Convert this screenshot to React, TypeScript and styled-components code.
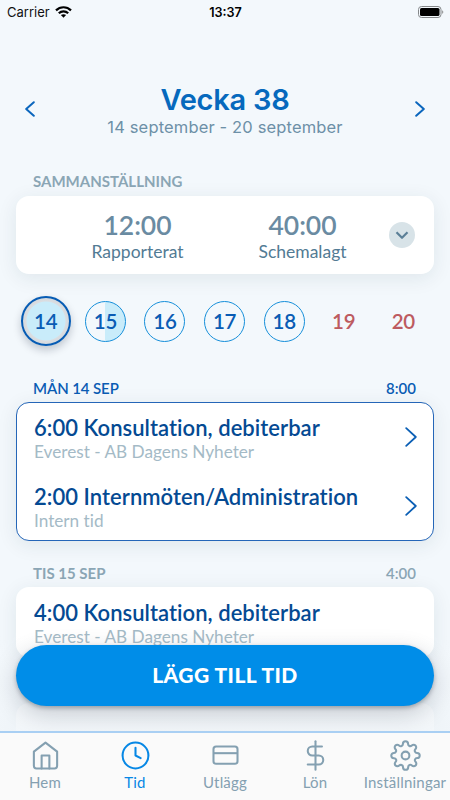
import React from "react";
import styled, { createGlobalStyle, css } from "styled-components";
import { FiHome, FiClock, FiDollarSign, FiSettings } from "react-icons/fi";

const GlobalStyle = createGlobalStyle`
  * { box-sizing: border-box; }
  body { margin: 0; background: #f3f8fc; }
`;

const Screen = styled.div`
  width: 450px;
  height: 800px;
  display: flex;
  flex-direction: column;
  overflow: hidden;
  position: relative;
  background: #f3f8fc;
  font-family: Lato, sans-serif;
  font-variant-ligatures: none;
`;

const StatusBar = styled.div`
  height: 24px;
  flex: none;
  display: grid;
  grid-template-columns: 1fr auto 1fr;
  align-items: center;
  padding: 0 6px 0 7px;
  font: 400 13px/24px Inter, sans-serif;
  color: #111;
`;

const Carrier = styled.div`
  display: flex;
  align-items: center;
  gap: 5px;
  padding-bottom: 1px;
`;

const Clock = styled.div`
  font-weight: 600;
  font-size: 12.6px;
  color: #000;
`;

const BatterySlot = styled.div`
  display: flex;
  justify-content: flex-end;
  padding-bottom: 2px;
`;

const Header = styled.header`
  height: 148px;
  flex: none;
  display: flex;
  justify-content: space-between;
  padding: 60px 24px 0;
`;

const WeekArrow = styled.button`
  width: 12px;
  height: 50px;
  padding: 0;
  border: 0;
  background: none;
  display: flex;
  align-items: center;
  justify-content: center;
`;

const WeekTitle = styled.div`
  text-align: center;
  font-family: Inter, sans-serif;
`;

const Week = styled.h1`
  margin: 0;
  font-size: 29px;
  line-height: 32px;
  font-weight: 600;
  letter-spacing: -0.25px;
  color: #0669bd;
`;

const WeekRange = styled.div`
  font-size: 16.5px;
  line-height: 22px;
  letter-spacing: 0.15px;
  color: #6d90a7;
`;

const SectionHead = styled.div<{ $active?: boolean }>`
  height: 30px;
  flex: none;
  display: flex;
  justify-content: space-between;
  padding: ${(p) => (p.$active ? "1px" : "0")} 34px 0 33px;
  font-size: 15px;
  line-height: 18px;
  font-weight: ${(p) => (p.$active ? 600 : 700)};
  letter-spacing: ${(p) => (p.$active ? "-0.1px" : "0")};
  color: ${(p) => (p.$active ? "#0a5cb4" : "#8ba6b5")};
`;

const DayHours = styled.span`
  font-weight: 600;
  letter-spacing: 0;
`;

const card = css`
  flex: none;
  margin: 0 16px;
  border-radius: 13px;
  background: #fff;
  box-shadow: 0 4px 20px rgba(20, 50, 70, 0.09);
`;

const Summary = styled.section`
  ${card}
  height: 78px;
  margin-top: -6px;
  display: grid;
  grid-template-columns: 39px 165px 165px 1fr;
  align-items: center;
`;

const Total = styled.div`
  text-align: center;
  padding-top: 3px;
`;

const TotalValue = styled.div`
  font-size: 26.5px;
  line-height: 29px;
  font-weight: 600;
  color: #6a8ba2;
`;

const TotalLabel = styled.div`
  font-size: 17.5px;
  line-height: 23px;
  color: #527b94;
`;

const Expand = styled.button`
  width: 26px;
  height: 26px;
  padding: 0;
  margin-left: 4px;
  border: 0;
  border-radius: 50%;
  background: #d8e3e8;
  display: flex;
  align-items: center;
  justify-content: center;
`;

const Days = styled.div`
  height: 50px;
  flex: none;
  margin: 22px 16px 32px;
  display: grid;
  grid-template-columns: repeat(7, 59.6px);
  align-items: center;
  justify-items: center;
`;

type DayKind = "selected" | "half" | "empty" | "weekend";

const Day = styled.button<{ $kind: DayKind }>`
  width: 41px;
  height: 41px;
  padding: 0;
  border-radius: 50%;
  border: 1px solid #168fda;
  background: transparent;
  font: 600 20.5px/39px Lato, sans-serif;
  letter-spacing: -0.2px;
  color: #0a5cb4;
  text-align: center;
  ${(p) => p.$kind === "half" && css`
    background: linear-gradient(90deg, transparent 50%, #c9ecfa 50%);
  `}
  ${(p) => p.$kind === "weekend" && css`
    border-color: transparent;
    color: #bd5b60;
  `}
  ${(p) => p.$kind === "selected" && css`
    width: 50px;
    height: 50px;
    line-height: 46px;
    border: 2px solid #075cb4;
    background: radial-gradient(circle, #c9ecfa 19px, #dbdde1 20px, #d4dade 23px);
    box-shadow: 0 4px 8px rgba(0, 20, 40, 0.22);
  `}
`;

const Entries = styled.section<{ $active?: boolean; $height: number }>`
  ${card}
  height: ${(p) => p.$height}px;
  margin-top: ${(p) => (p.$active ? "-6px" : "-7px")};
  padding: ${(p) => (p.$active ? "0" : "1px")};
  border: ${(p) => (p.$active ? "1px solid #2566b8" : "0")};
`;

const Entry = styled.div`
  height: 68.5px;
  display: flex;
  justify-content: space-between;
  align-items: center;
  padding: 0 16px 0 17px;
`;

const EntryText = styled.div`
  padding-top: 3px;
`;

const EntryTitle = styled.div`
  font-size: 22px;
  line-height: 26px;
  font-weight: 600;
  letter-spacing: 0.04px;
  color: #044a93;
`;

const EntryInfo = styled.div`
  font-size: 17.2px;
  line-height: 21px;
  color: #a4bac6;
`;

const Gap = styled.div`
  height: 23px;
  flex: none;
`;

const BottomFade = styled.div`
  position: absolute;
  left: 0;
  right: 0;
  top: 635px;
  height: 97px;
  background: linear-gradient(rgba(243, 248, 252, 0), rgba(240, 245, 249, 0.85));
`;

const AddButton = styled.button`
  position: absolute;
  left: 16px;
  right: 16px;
  top: 645px;
  height: 60.5px;
  border: 0;
  border-radius: 31px;
  background: #008de8;
  color: #fff;
  font: 900 21px/60px Lato, sans-serif;
  letter-spacing: 0.45px;
  padding: 0;
  box-shadow: 0 2px 4px rgba(0, 20, 40, 0.28), 0 8px 24px rgba(0, 20, 40, 0.2);
`;

const TabBar = styled.nav`
  position: absolute;
  left: 0;
  right: 0;
  bottom: 0;
  height: 69px;
  display: grid;
  grid-template-columns: repeat(5, 1fr);
  border-top: 2px solid #a9cff3;
  background: #fafafa;
`;

const Tab = styled.div<{ $active?: boolean }>`
  display: flex;
  flex-direction: column;
  align-items: center;
  padding-top: 7px;
  font-size: 15px;
  line-height: 22px;
  letter-spacing: 0.2px;
  white-space: nowrap;
  color: ${(p) => (p.$active ? "#0687e5" : "#84a0b1")};
  svg { flex: none; stroke-width: 1.6; }
`;

function Chevron({ w, h, color, left, stroke = 2 }: { w: number; h: number; color: string; left?: boolean; stroke?: number }) {
  const d = left ? `M${w - 1.2} 1.2L1.2 ${h / 2}L${w - 1.2} ${h - 1.2}` : `M1.2 1.2L${w - 1.2} ${h / 2}L1.2 ${h - 1.2}`;
  return (
    <svg width={w} height={h} fill="none" stroke={color} strokeWidth={stroke} strokeLinecap="round" strokeLinejoin="round">
      <path d={d} />
    </svg>
  );
}

function CardIcon({ size }: { size: number }) {
  return (
    <svg width={size} height={size} viewBox="0 0 24 24" fill="none" stroke="currentColor">
      <rect x="2.7" y="5.1" width="18.6" height="13.3" rx="2" />
      <path d="M2.7 10.2H21.3" />
    </svg>
  );
}

function EntryRow({ title, info, arrow }: { title: string; info: string; arrow?: boolean }) {
  return (
    <Entry>
      <EntryText>
        <EntryTitle>{title}</EntryTitle>
        <EntryInfo>{info}</EntryInfo>
      </EntryText>
      {arrow && <Chevron w={12} h={20} color="#0b5fb5" stroke={1.8} />}
    </Entry>
  );
}

const days: { label: string; kind: DayKind }[] = [
  { label: "14", kind: "selected" },
  { label: "15", kind: "half" },
  { label: "16", kind: "empty" },
  { label: "17", kind: "empty" },
  { label: "18", kind: "empty" },
  { label: "19", kind: "weekend" },
  { label: "20", kind: "weekend" },
];

const tabs = [
  { label: "Hem", Icon: FiHome },
  { label: "Tid", Icon: FiClock },
  { label: "Utlägg", Icon: CardIcon },
  { label: "Lön", Icon: FiDollarSign },
  { label: "Inställningar", Icon: FiSettings },
];

export default function App() {
  return (
    <Screen>
      <GlobalStyle />
      <StatusBar>
        <Carrier>
          Carrier
          <svg width="17" height="12" viewBox="0 0 17 12" fill="none" stroke="#000" strokeWidth="2.2">
            <path d="M1 4.4C5.2 0.2 11.8 0.2 16 4.4" />
            <path d="M3.8 7.2C6.4 4.7 10.6 4.7 13.2 7.2" />
            <path d="M8.5 11.8L5.9 9.1C7.4 7.8 9.6 7.8 11.1 9.1Z" fill="#000" stroke="none" />
          </svg>
        </Carrier>
        <Clock>13:37</Clock>
        <BatterySlot>
          <svg width="26" height="12" viewBox="0 0 26 12">
            <rect x="0.5" y="0.5" width="22.5" height="11" rx="3" fill="none" stroke="#85888a" />
            <rect x="2" y="2" width="19.5" height="8" rx="1.6" fill="#000" />
            <path d="M24.3 4.2C25.6 4.7 25.6 7.3 24.3 7.8Z" fill="#777" />
          </svg>
        </BatterySlot>
      </StatusBar>
      <Header>
        <WeekArrow><Chevron w={10} h={16} color="#0b66bd" left /></WeekArrow>
        <WeekTitle>
          <Week>Vecka 38</Week>
          <WeekRange>14 september - 20 september</WeekRange>
        </WeekTitle>
        <WeekArrow><Chevron w={10} h={16} color="#0b66bd" /></WeekArrow>
      </Header>
      <SectionHead>SAMMANSTÄLLNING</SectionHead>
      <Summary>
        <span />
        <Total><TotalValue>12:00</TotalValue><TotalLabel>Rapporterat</TotalLabel></Total>
        <Total><TotalValue>40:00</TotalValue><TotalLabel>Schemalagt</TotalLabel></Total>
        <Expand>
          <svg width="14" height="9" fill="none" stroke="#5b7f97" strokeWidth="2.2" strokeLinejoin="round">
            <path d="M1.5 1.3L7 6.8L12.5 1.3" />
          </svg>
        </Expand>
      </Summary>
      <Days>
        {days.map((d) => <Day key={d.label} $kind={d.kind}>{d.label}</Day>)}
      </Days>
      <SectionHead $active><span>MÅN 14 SEP</span><DayHours>8:00</DayHours></SectionHead>
      <Entries $active $height={139}>
        <EntryRow arrow title="6:00 Konsultation, debiterbar" info="Everest - AB Dagens Nyheter" />
        <EntryRow arrow title="2:00 Internmöten/Administration" info="Intern tid" />
      </Entries>
      <Gap />
      <SectionHead><span>TIS 15 SEP</span><DayHours>4:00</DayHours></SectionHead>
      <Entries $height={70}>
        <EntryRow title="4:00 Konsultation, debiterbar" info="Everest - AB Dagens Nyheter" />
      </Entries>
      <Gap />
      <SectionHead><span>ONS 16 SEP</span><DayHours>0:00</DayHours></SectionHead>
      <Entries $height={70} />
      <BottomFade />
      <AddButton>LÄGG TILL TID</AddButton>
      <TabBar>
        {tabs.map(({ label, Icon }) => (
          <Tab key={label} $active={label === "Tid"}><Icon size={31} />{label}</Tab>
        ))}
      </TabBar>
    </Screen>
  );
}
